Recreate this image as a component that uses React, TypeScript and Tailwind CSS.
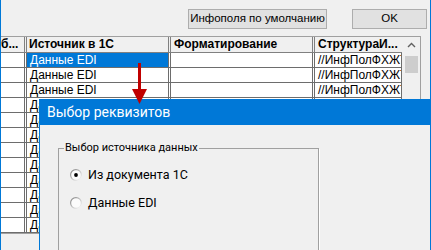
const rows = Array.from({ length: 12 }, (_, i) => i);

function Radio({ checked, id }: { checked?: boolean; id: string }) {
  return (
    <svg width="12" height="12" viewBox="0 0 12 12" className="shrink-0">
      <defs>
        <linearGradient id={id} x1="0" y1="0" x2="1" y2="1">
          <stop offset="0" stopColor="#7a7a7a" />
          <stop offset="0.55" stopColor="#c8c8c8" />
          <stop offset="1" stopColor="#ffffff" />
        </linearGradient>
      </defs>
      <circle cx="6" cy="6" r="5.4" fill="#fbfbfb" stroke={`url(#${id})`} strokeWidth="1.2" />
      {checked && <circle cx="6" cy="6" r="1.9" fill="#000" />}
    </svg>
  );
}

const App = () => {
  return (
    <div className="relative w-[431px] h-[250px] overflow-hidden bg-[#f0f0f0] border-x border-[#0078d7] font-['Liberation_Sans',Arial,sans-serif] text-[11px] text-black">
      {/* buttons */}
      <div className="flex justify-end gap-[25px] pt-[9px] pr-[3px]">
        <button className="h-[20px] w-[139px] border border-[#adadad] bg-[#e1e1e1] leading-none text-[11.5px]">
          Инфополя по умолчанию
        </button>
        <button className="h-[20px] w-[75px] border border-[#adadad] bg-[#e1e1e1] leading-none text-[11.5px]">
          OK
        </button>
      </div>

      {/* grid */}
      <div className="mt-[7px] flex w-[420px] border-t border-b border-r border-[#a0a0a0] bg-white">
        <div className="w-[401px]">
          <div className="flex h-[16px] border-b border-[#808080] bg-[#f0f0f0] font-bold text-[12px] leading-[15px]">
            <div className="w-[26px] overflow-hidden whitespace-nowrap border-r-[3px] border-double border-[#808080]">б...</div>
            <div className="w-[144px] overflow-hidden whitespace-nowrap border-r-[3px] border-double border-[#808080] pl-[2px]">Источник в 1С</div>
            <div className="w-[144px] overflow-hidden whitespace-nowrap border-r-[3px] border-double border-[#808080] pl-[3px]">Форматирование</div>
            <div className="w-[87px] overflow-hidden whitespace-nowrap pl-[3px]">СтруктураИ...</div>
          </div>
          {rows.map((i) => (
            <div key={i} className="flex h-[15px] border-b border-[#6d6d6d] text-[12px] leading-[14px]">
              <div className="w-[26px] border-r-[3px] border-double border-[#6d6d6d]" />
              <div
                className={`w-[144px] overflow-hidden whitespace-nowrap border-r-[3px] border-double border-[#6d6d6d] bg-clip-padding pl-[3px] ${
                  i === 0 ? 'bg-[#0078d7] text-white' : ''
                }`}
              >
                Данные EDI
              </div>
              <div className="w-[144px] border-r-[3px] border-double border-[#6d6d6d]" />
              <div className="w-[87px] overflow-hidden whitespace-nowrap border-r border-[#6d6d6d] pl-[3px]">
                //ИнфПолФХЖТ
              </div>
            </div>
          ))}
        </div>
        {/* vertical scrollbar */}
        <div className="w-[18px] bg-[#f0f0f0] flex flex-col items-center">
          <div className="h-[16px] flex items-center justify-center">
            <svg width="9" height="6" viewBox="0 0 9 6">
              <polyline points="1,5 4.5,1.5 8,5" fill="none" stroke="#606060" strokeWidth="1.4" />
            </svg>
          </div>
          <div className="mt-[3px] h-[17px] w-[13px] bg-[#cdcdcd]" />
        </div>
      </div>

      {/* dialog */}
      <div className="absolute left-[38px] top-[99px] w-[393px] h-[160px] border-x border-[#0078d7] bg-[#f0f0f0] font-['Roboto','Noto_Sans',sans-serif] text-[12.5px]">
        <div className="flex h-[26px] items-center bg-[#0078d7] pl-[7px] text-[14px] text-white">Выбор реквизитов</div>
        <div className="pl-[18px] pt-[15px]">
          <fieldset className="h-[140px] w-[261px] border border-[#a0a0a0] shadow-[1px_1px_0_#fff]">
            <legend className="ml-[5px] px-[1px] text-[11px] leading-[16px]">Выбор источника данных</legend>
            <div className="mt-[11px] flex h-[16px] items-center gap-[6px] pl-[11px]">
              <Radio checked id="r1" />
              <span>Из документа 1С</span>
            </div>
            <div className="mt-[12px] flex h-[16px] items-center gap-[6px] pl-[11px]">
              <Radio id="r2" />
              <span>Данные EDI</span>
            </div>
          </fieldset>
        </div>
      </div>

      {/* red arrow */}
      <svg className="absolute left-[130px] top-[62px]" width="18" height="44" viewBox="0 0 18 44">
        <rect x="7" y="1" width="3" height="28" fill="#c00000" />
        <polygon points="1,27 16,27 8.5,42" fill="#c00000" />
      </svg>
    </div>
  );
};

export default App;
